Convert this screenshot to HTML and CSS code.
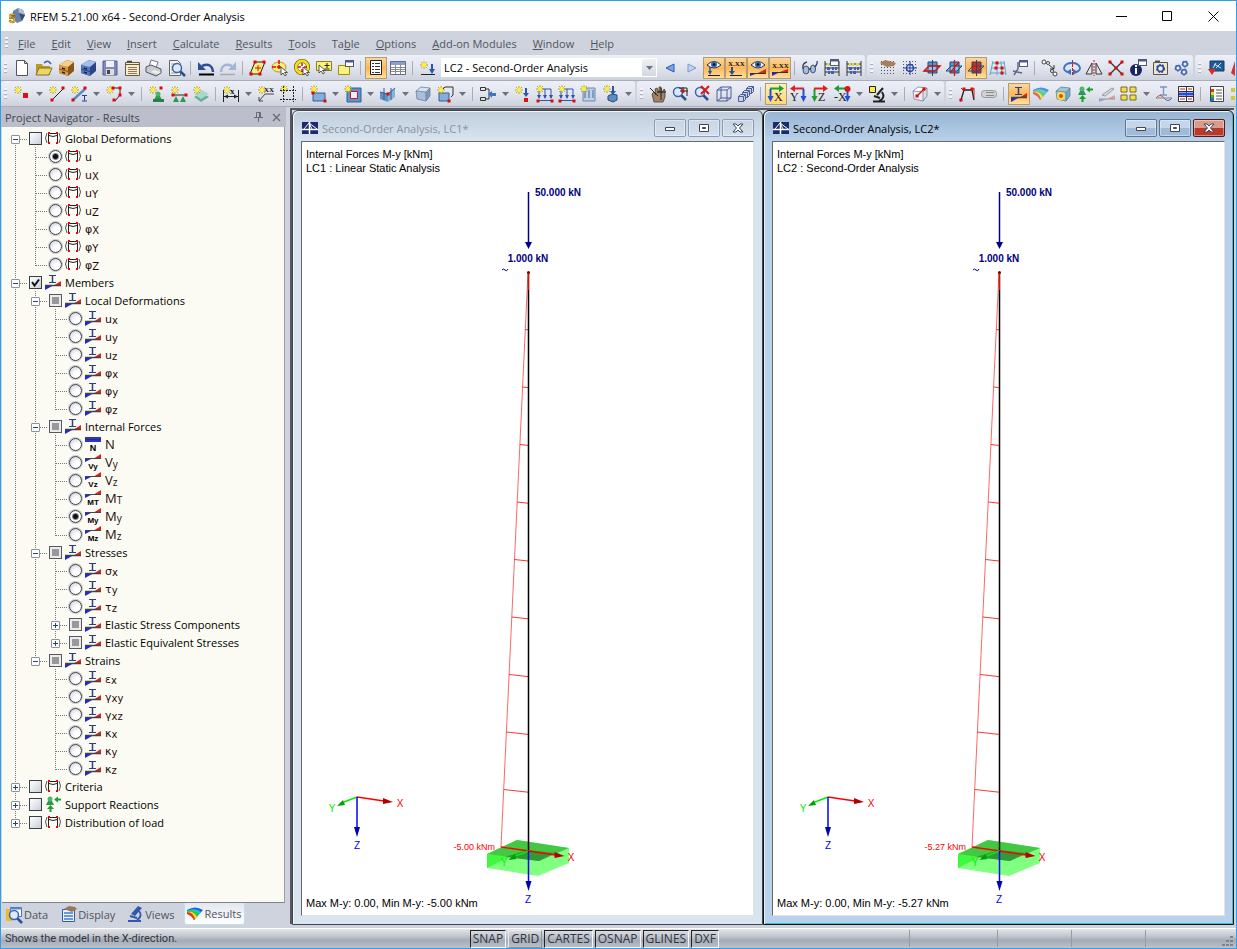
FILE: index.html
```html
<!DOCTYPE html>
<html lang="en">
<head>
  <meta charset="UTF-8">
  <meta name="viewport" content="width=device-width, initial-scale=1.0">
  <title>RFEM 5.21.00 x64 - Second-Order Analysis</title>
  <link rel="stylesheet" href="styles.css">
</head>
<body>
  <div class="app">
    <header class="titlebar">
      <span class="icon" data-icon="app"></span>
      <h1>RFEM 5.21.00 x64 - Second-Order Analysis</h1>
      <button class="caption-btn" aria-label="Minimize"><svg width="11" height="11"><path d="M0 5.5h11" stroke="#000"/></svg></button>
      <button class="caption-btn" aria-label="Maximize"><svg width="11" height="11"><path d="M.5.5h9v9h-9z" fill="none" stroke="#000"/></svg></button>
      <button class="caption-btn" aria-label="Close"><svg width="11" height="11"><path d="M.5.5l10 10M10.500.5l-10 10" stroke="#000"/></svg></button>
    </header>

    <nav class="menubar">
      <span class="grip"></span>
      <button><u>F</u>ile</button>
      <button><u>E</u>dit</button>
      <button><u>V</u>iew</button>
      <button><u>I</u>nsert</button>
      <button><u>C</u>alculate</button>
      <button><u>R</u>esults</button>
      <button><u>T</u>ools</button>
      <button>Ta<u>b</u>le</button>
      <button><u>O</u>ptions</button>
      <button><u>A</u>dd-on Modules</button>
      <button><u>W</u>indow</button>
      <button><u>H</u>elp</button>
    </nav>

    <div class="toolbar" id="toolbar-main"></div>
    <div class="toolbar" id="toolbar-model"></div>

    <main class="workspace">
      <aside class="navigator">
        <div class="nav-head">
          <h2>Project Navigator - Results</h2>
          <button aria-label="Pin"><svg width="9" height="10"><path d="M2.500.5h4v5h-4zM5.500.5v5M0 5.500h9M4.500 6v4" fill="none" stroke="#666a74"/></svg></button>
          <button aria-label="Close navigator"><svg width="9" height="9"><path d="M1 1l7 7M8 1l-7 7" stroke="#666a74" stroke-width="1.300"/></svg></button>
        </div>
        <ul class="tree" id="tree"></ul>
        <div class="tabs">
          <button class="tab"><span class="icon" data-icon="tabData"></span>Data</button>
          <button class="tab"><span class="icon" data-icon="tabDisplay"></span>Display</button>
          <button class="tab"><span class="icon" data-icon="tabViews"></span>Views</button>
          <button class="tab current"><span class="icon" data-icon="tabResults"></span>Results</button>
        </div>
      </aside>
      <section class="mdi" id="mdi"></section>
    </main>

    <footer class="statusbar">
      <p class="hint">Shows the model in the X-direction.</p>
      <div class="modes">
        <button class="mode on">SNAP</button>
        <button class="mode">GRID</button>
        <button class="mode on">CARTES</button>
        <button class="mode on">OSNAP</button>
        <button class="mode on">GLINES</button>
        <button class="mode on">DXF</button>
      </div>
      <span class="pane wide"></span>
      <span class="pane mid"></span>
      <span class="pane"></span>
      <span class="pane"></span>
      <svg class="sizer" width="12" height="12"><path d="M8 1h3v2h-3zM4 5h3v2h-3zM8 5h3v2h-3zM0 9h3v2h-3zM4 9h3v2h-3zM8 9h3v2h-3z" fill="#7d828c"/></svg>
    </footer>
  </div>
  <script src="script.js"></script>
</body>
</html>
```
FILE: styles.css
```css
* {
  box-sizing: border-box;
}

body {
  margin: 0;
  font-family: "Open Sans", "Noto Sans", sans-serif;
  font-size: 11px;
  color: #000;
}

button {
  font: inherit;
  color: inherit;
  background: none;
  border: 0;
  padding: 0;
  margin: 0;
}

h1, h2, p, ul {
  margin: 0;
  padding: 0;
  font-size: 11px;
  font-weight: normal;
}

svg {
  display: block;
  overflow: visible;
}

.app {
  display: flex;
  flex-direction: column;
  height: 100vh;
  overflow: hidden;
  border: 1px solid #2f9fec;
  background: #cfd3dd;
}

/* title bar */
.titlebar {
  display: flex;
  align-items: center;
  height: 30px;
  padding-left: 7px;
  background: #fff;
}

.titlebar h1 {
  flex: 1;
  margin-left: 4px;
}

.caption-btn {
  display: grid;
  place-items: center;
  width: 46px;
  height: 30px;
}

/* menu */
.menubar {
  display: flex;
  align-items: center;
  gap: 16px;
  height: 24px;
  padding-left: 4px;
  color: #50555f;
  white-space: nowrap;
}

.menubar .grip {
  margin-right: -6px;
}

.grip {
  flex: none;
  width: 3px;
  height: 12px;
  background: repeating-linear-gradient(#f4f5f8 0 2px, #abb0bd 2px 3px, transparent 3px 4px);
}

/* toolbars */
.toolbar {
  display: flex;
  height: 26px;
  overflow: hidden;
  border-bottom: 1px solid #a9aeba;
}

.band {
  display: flex;
  flex: none;
  align-items: center;
  height: 25px;
  padding-left: 10px;
  border-radius: 3px;
  background: linear-gradient(#edf0f7, #e2e5ee 50%, #ced2dd);
}

.band + .band {
  margin-left: 2px;
}

.band:last-child {
  flex: 1;
}

.band .grip {
  margin: 0 4px 0 -7px;
}

.tool {
  display: grid;
  flex: none;
  place-items: center;
  width: 22px;
  height: 22px;
}

.tool.active {
  border: 1px solid #b39b72;
  background: linear-gradient(#fbd7a0, #fcb759 50%, #ffe09a);
}

.tool.light {
  background: linear-gradient(#fff0ba, #ffd672);
}

.drop {
  flex: none;
  display: grid;
  place-items: center;
  width: 13px;
  height: 22px;
}

.sep {
  flex: none;
  width: 1px;
  height: 14px;
  margin: 0 4px 0 3px;
  background: #a9adba;
}

.combo {
  display: flex;
  flex: none;
  width: 216px;
  height: 19px;
  margin: 0 2px;
  background: #fff;
}

.combo select {
  flex: 1;
  appearance: none;
  border: 0;
  padding: 0 3px;
  background: #fff;
  font: inherit;
  color: #000;
}

.combo span {
  display: grid;
  place-items: center;
  width: 14px;
  margin: 1px;
  background: linear-gradient(#eff1f6, #d3d7e0);
}

/* navigator */
.workspace {
  display: flex;
  flex: 1;
  min-height: 0;
  gap: 4px;
}

.navigator {
  display: flex;
  flex: none;
  flex-direction: column;
  width: 285px;
}

.nav-head {
  display: flex;
  align-items: center;
  gap: 9px;
  height: 20px;
  padding: 0 5px 0 4px;
  background: #bcbfcb;
  color: #41454f;
}

.nav-head h2 {
  flex: 1;
}

.tree {
  flex: 1;
  min-height: 0;
  overflow: hidden;
  margin: 0 1px;
  padding-top: 2px;
  border-right: 1px solid #9b9fad;
  border-bottom: 1px solid #7e8290;
  background: #fbfbf3;
  list-style: none;
}

.tree ul {
  padding-left: 20px;
  list-style: none;
}

.tree li {
  background: repeating-linear-gradient(#777 0 1px, transparent 1px 2px) 13px 0 / 1px 100% no-repeat;
}

.tree li:last-child {
  background-size: 1px 11px;
}

.tree > li:first-child {
  background-position: 13px 10px;
}

.node {
  display: flex;
  align-items: center;
  height: 18px;
  padding-left: 9px;
  background: repeating-linear-gradient(90deg, #777 0 1px, transparent 1px 2px) 14px 10px / 11px 1px no-repeat;
  white-space: nowrap;
}

.expander {
  width: 9px;
  height: 9px;
  margin-top: 3px;
  border: 1px solid #8d919b;
  border-radius: 1px;
  background: #fff;
}

.stub {
  width: 9px;
}

.node label {
  display: flex;
  align-items: center;
  height: 18px;
  margin-left: 9px;
}

.node input {
  appearance: none;
  flex: none;
  width: 13px;
  height: 13px;
  margin: 0;
  border: 1px solid #3c3f45;
  background: linear-gradient(135deg, #fff, #c9d0da);
}

.node input[type="radio"] {
  border-radius: 50%;
  background: radial-gradient(circle at 65% 70%, #fff 30%, #c6cad6);
  box-shadow: 0 0 0 1px #c9ccd0;
}

.node input[type="radio"]:checked {
  background: radial-gradient(circle, #111 2px, #fff 4px, #d5d8e0);
}

.node input.partial {
  border-color: #55585e;
  background: linear-gradient(#999, #999) center / 7px 7px no-repeat #ececf0;
}

.check {
  display: grid;
}

.check > * {
  grid-area: 1 / 1;
}

.node .icon {
  margin: 0 4px 0 3px;
}

.node sub {
  font-size: 10px;
  line-height: 1;
  vertical-align: -1px;
}

.node .symbol {
  font-family: "DejaVu Sans", "Noto Sans", sans-serif;
  font-size: 11px;
  color: #1f0b0b;
}

.node .symbol.force {
  font-family: "Open Sans", "Noto Sans", sans-serif;
  font-size: 13px;
}

.tabs {
  display: flex;
  align-items: flex-start;
  height: 25px;
  padding-left: 5px;
  color: #50555f;
}

.tab {
  display: flex;
  align-items: center;
  gap: 2px;
  height: 22px;
  margin-right: 12px;
}

.tab.current {
  margin-left: -3px;
  padding: 0 3px 0 2px;
  border: 1px solid #bfe2e4;
  border-top: 0;
  border-radius: 0 0 3px 3px;
  background: linear-gradient(#e2e8f0, #fff);
}

/* model windows */
.mdi {
  display: grid;
  flex: 1;
  grid-template-columns: 1fr 1fr;
  min-width: 0;
  margin: 1px 2px 4px 0;
  border-top: 2px solid #55585f;
  border-left: 2px solid #55585f;
}

.win {
  display: flex;
  flex-direction: column;
  min-width: 0;
  padding: 0 8px;
  border: 1px solid #44474d;
  border-radius: 6px 6px 0 0;
  background: linear-gradient(#bfcddb, #d9e4f1 30px);
  box-shadow: inset 1px 1px #eef4fa;
}

.win.front {
  border-color: #111;
  background: linear-gradient(#98b4d2, #b9d1ea 30px);
  box-shadow: inset 1px 1px #eaf3fb, inset -1px -1px #32c3da;
}

.win-title {
  display: flex;
  align-items: center;
  gap: 2px;
  height: 30px;
  padding-top: 4px;
  color: #8b929a;
}

.front .win-title {
  color: #000;
}

.win-title h2 {
  flex: 1;
  margin-left: 1px;
}

.win-btn {
  display: grid;
  place-items: center;
  width: 32px;
  height: 18px;
  border: 1px solid #8a9cb8;
  border-radius: 2px;
  box-shadow: inset 0 0 0 1px rgba(255, 255, 255, 0.4);
}

.front .win-btn {
  border-color: #5f7594;
  background: linear-gradient(#c3d6ea 50%, #a0bbd8 50%);
}

.front .win-btn.close {
  border-color: #4e1c1f;
  background: linear-gradient(#dc9a8b 50%, #b93a2b 50%);
}

.view {
  display: flex;
  flex: 1;
  flex-direction: column;
  min-height: 0;
  margin-bottom: 8px;
  padding: 5px 4px;
  border: 1px solid #e3e3e3;
  border-top-color: #696969;
  border-left-color: #696969;
  background: #fff;
  font-family: "Liberation Sans", Arial, sans-serif;
  line-height: 14px;
}

.model {
  flex: 1;
  min-height: 0;
  width: 100%;
}

.model text {
  text-anchor: middle;
}

.load-label {
  font-size: 10px;
  font-weight: bold;
  fill: #000080;
}

.model .moment-label {
  font-size: 9px;
  fill: #f00;
  text-anchor: end;
}

.axis-label {
  font-size: 10px;
}

/* status bar */
.statusbar {
  display: flex;
  align-items: center;
  height: 20px;
  padding: 0 2px 0 4px;
  border-top: 1px solid #fff;
  background: linear-gradient(#e3e5ec, #c4c8d1 35%, #a6abb6 60%, #bdc1ca);
  color: #30343c;
}

.hint {
  flex: 1;
  font-family: Roboto, "Liberation Sans", sans-serif;
}

.modes {
  display: flex;
  gap: 2px;
}

.mode {
  height: 18px;
  padding: 0 2px;
  border: 1px solid #e9ebef;
  border-right-color: #8f939c;
  border-bottom-color: #8f939c;
  font-size: 12px;
  line-height: 16px;
}

.mode.on {
  border-color: #222 #f5f6f8 #f5f6f8 #222;
}

.pane {
  width: 74px;
  height: 17px;
  border-right: 1px solid #979ba4;
}

.pane.wide {
  width: 191px;
}

.pane.mid {
  width: 88px;
}

.sizer {
  margin: 4px 0 0 76px;
}
```
FILE: script.js
```js
// ---- drawing helpers -------------------------------------------------
const star = (x, y) =>
  `<path d="M${x} ${y - 4}v8M${x - 4} ${y}h8M${x - 3} ${y - 3}l6 6M${x + 3} ${y - 3}l-6 6" stroke="#b5a92a"/><circle cx="${x}" cy="${y}" r="2.2" fill="#ffee3a"/>`;
const dot = (x, y) => `<rect x="${x - 1.5}" y="${y - 1.5}" width="3" height="3" fill="#e00808"/>`;
const path = (d, stroke = '#222', fill = 'none', w = 1) =>
  `<path d="${d}" stroke="${stroke}" fill="${fill}" stroke-width="${w}"/>`;
const fillPath = (d, fill) => `<path d="${d}" fill="${fill}"/>`;
const word = (x, y, s, size = 8, color = '#111') =>
  `<text x="${x}" y="${y}" font-family="Liberation Serif, serif" font-weight="bold" font-size="${size}" fill="${color}">${s}</text>`;
const dots = () => {
  let d = '';
  for (let y = 2; y < 17; y += 3) for (let x = 2; x < 17; x += 3) d += `M${x} ${y}h1v1h-1z`;
  return fillPath(d, '#555');
};

const beam = path('M5 2.500h7M8.500 2.500v7M5 9.500h7', '#2b3f86') + path('M8.500 2v8', '#2b3f86', 'none', 1.5) +
  fillPath('M1 12h9l-9 5z', '#2028d8') + fillPath('M9 13l8-5v5z', '#dc2020') + path('M1 12.500h16', '#444', 'none', 1.5);
const slope = fillPath('M1 5h8l-8 4z', '#2028d8') + fillPath('M9 6l8-5v4z', '#dc2020') + path('M1 5.500h16', '#444');
const forceIcon = (s) => slope + `<text x="9" y="16" text-anchor="middle" font-family="Liberation Sans, sans-serif" font-size="8" font-weight="bold">${s}</text>`;
const drawer = (a, b, c) => fillPath('M2 6l8-5 7 2v9l-6 5-9-3z', c) + fillPath('M2 6l9 2v9l-9-3z', a) +
  fillPath('M2 6l8-5 7 2-6 5z', b) + path('M2 10l9 2.500', c) + fillPath('M5 8.500l3 .8v1.500l-3-.8zM5 12.500l3 .8v1.500l-3-.8z', '#222');
const winGlyph = (x, y) => `<rect x="${x}" y="${y}" width="8" height="6" fill="#fff" stroke="#555b77"/><path d="M${x} ${y + 1}h8" stroke="#4c5a90" stroke-width="2"/>`;
const pointer = (x, y) => path(`M${x} ${y}v8l2-2 2 3 1.500-1-2-2.500h3z`, '#333', '#fff', 0.8);
const lens = (x, y) => path(`M${x + 3} ${y + 3}l5 5`, '#2f4f95', 'none', 2.5) + `<circle cx="${x}" cy="${y}" r="4.500" fill="#dceafd" stroke="#4263a8" stroke-width="1.500"/>`;
const eye = path('M2 6q7-7 14 0q-7 6-14 0z', '#26324f', '#eaf2ff') + '<circle cx="9" cy="5.500" r="3" fill="#3870b8"/><circle cx="9" cy="5.500" r="1.300" fill="#000"/>';
const cube = (a, b, c) => fillPath('M2 6l5-4 9 1-4 4z', a) + fillPath('M2 6l10 1v9l-9-2z', b) + fillPath('M12 7l4-4v8l-4 5z', c) + path('M2 6l5-4 9 1v8l-4 5-9-2zM2 6l10 1v9M12 7l4-4', '#64748c', 'none', 0.7);
const plane = fillPath('M5 3h9v11h-9z', '#4a9bd8') + fillPath('M1 12l5-5h11l-5 5z', '#8cc9f2') + path('M5 3h9v11h-9zM1 12l5-5h11l-5 5zM9.500 1v16', '#26486e');
const cone = (x, y) => fillPath(`M${x - 4} ${y + 6}l2-4v-3h4v3l2 4z`, '#2e9652') + `<circle cx="${x}" cy="${y}" r="2.500" fill="#48b870"/>`;
const gear = (x, y, r, c) => `<circle cx="${x}" cy="${y}" r="${r}" fill="none" stroke="${c}" stroke-width="${r}" stroke-dasharray="1.500 1"/><circle cx="${x}" cy="${y}" r="${r}" fill="#e8eefb" stroke="${c}" stroke-width="1.500"/>`;
const axisLetter = (x, s) => `<text x="${x}" y="16" font-family="Liberation Serif, serif" font-size="12" fill="#222">${s}</text>`;
const axes = (s, h, v, flip) => (flip
  ? path('M15 3.500h-10', h, 'none', 2) + fillPath('M6 0v7l-5-3.500z', h) + path('M14.500 4v8', v, 'none', 2) + fillPath('M11.500 11h6l-3 6z', v)
  : path('M3 3.500h10', h, 'none', 2) + fillPath('M12 0v7l5-3.500z', h) + path('M3.500 4v8', v, 'none', 2) + fillPath('M.5 11h6l-3 6z', v)) +
  axisLetter(flip ? 1 : 7, s);
const rainbow = (o) => `<g opacity="${o}">` + fillPath('M1 5q8-5 16 0l-9 10q-1-5-7-8z', '#2060e0') + fillPath('M1 6q8-4 14 1l-7 8q-1-5-7-8z', '#20c8d0') +
  fillPath('M1 6q8-2 12 3l-5 6q-1-5-7-8z', '#28cc40') + fillPath('M1 7q7-1 10 5l-3 3q-1-5-7-8z', '#f4e022') + fillPath('M1 7q6 0 8 7l-1 1q-2-4-7-6z', '#ee3420') + '</g>';
const frame = path('M4.500 15v-10.500h9v10.500M5 6.500q4 2 8 0', '#222') + fillPath('M4 3h2v2h-2zM12 3h2v2h-2zM4 13h2v2h-2zM12 13h2v2h-2z', '#e00808') + path('M3 4q-3 5 0 10M15 4q3 5 0 10', '#555');
const abacus = path('M2 2v15M16 2v15M2 5h14M2 9h14M2 13h14', '#333') + fillPath('M4 4h2v3h-2zM7 4h2v3h-2zM11 4h3v3h-3z', '#e8d848') + fillPath('M4 8h3v3h-3zM9 8h2v3h-2zM12 8h2v3h-2zM5 12h2v3h-2zM8 12h3v3h-3z', '#4060b8');
const loads = (c) => path('M3 4h12v9M3 4v9M9 4v9M1 15.500h16', c) + fillPath('M1 10h4l-2 4zM7 10h4l-2 4zM13 10h4l-2 4z', c);

const icons = {
  app: fillPath('M5 4l5-3 5 2 2 5-3 6-5 2-5-5z', '#6781a8') + fillPath('M10 1l5 2 2 5-6-2z', '#a9bedb') + fillPath('M11 6l6 2-3 6z', '#394c70') +
    '<text x="1" y="16" font-family="Liberation Sans, sans-serif" font-size="12" font-weight="bold" fill="#ffd83a" stroke="#6e5500" stroke-width=".6">5</text>',
  new: path('M3.500 1.500h8l3 3v12h-11zM11.500 1.500v3h3', '#555', '#fff'),
  open: fillPath('M1 5h6l1 2h7v9h-14z', '#b79a28') + path('M1 16l3-7h13l-3 7z', '#86701c', '#ecd568') + path('M9 4q4-4 7 1', '#3c5f9c', 'none', 1.5),
  drawerA: drawer('#d9983c', '#f4cf85', '#86561b'),
  drawerB: drawer('#5275c4', '#a6bdf0', '#2b4484'),
  save: path('M2 2h14v14h-14z', '#555c82', '#8188c0') + fillPath('M5 2h8v6h-8z', '#f0f2fa') + fillPath('M5 10h8v6h-8z', '#ddd') + fillPath('M6 11h3v4h-3z', '#444'),
  notes: path('M2.500 3.500h14v13h-14z', '#6a5a40', '#f6ead0') + path('M5 8.500h9M5 10.500h9M5 12.500h9M5 14.500h9', '#937a55') + path('M4 2.500h5', '#444', 'none', 1.5) + path('M2.500 5.500h14', '#6a5a40'),
  print: path('M4 8l2-7 7 2-2 6z', '#777', '#fff') + path('M1 8l5-2 10 4v4l-5 3-10-4z', '#555', '#c9ccd6') + fillPath('M6 13l7 2 3-2-7-2z', '#f3f0e0'),
  preview: path('M2.500 1.500h8l3 3v12h-11z', '#666', '#f4f4f4') + path('M4 5h6M4 8h4M4 11h4M4 14h6', '#999') + lens(10, 9),
  undo: path('M16 13q-1-10-11-6', '#2c4f94', 'none', 2.5) + fillPath('M1 3v8h8z', '#2c4f94') + path('M2 15.500h15', '#000', 'none', 2),
  redo: path('M2 13q1-10 11-6', '#a4b4d4', 'none', 2.5) + fillPath('M17 3v8h-8z', '#a4b4d4') + path('M1 15.500h15', '#aaa', 'none', 1.5),
  para: path('M6 3h10l-5 12h-10z', '#222', '#f8f07a') + dot(6, 3) + dot(15, 3) + dot(11, 15) + dot(2, 15) + path('M9 6v6M6 9h6', '#e00808'),
  ellipse: '<ellipse cx="8" cy="8" rx="7" ry="5" fill="#f8f07a" stroke="#b4982c"/>' + path('M8 1v4M1 8h4M8 6v4M6 8h4', '#e00808', 'none', 1.5) + pointer(10, 8),
  ring: '<circle cx="9" cy="8" r="6" fill="#fff" stroke="#5a5200" stroke-width="4"/><circle cx="9" cy="8" r="6" fill="none" stroke="#f2e21c" stroke-width="2.800"/>' + path('M9 4v3M5 8h3M9 10v3M11 8h3', '#e00808', 'none', 1.5) + pointer(10, 8),
  select: path('M1.500 2.500h15v9h-15z', '#8a7d22', '#fbf27a') + path('M12 4v5M9.500 6.500h5M9.500 10h5', '#222') + pointer(4, 6),
  winBox: path('M1.500 6.500h11v9h-11z', '#9c8c20', '#fbf27a') + winGlyph(8.5, 1.5),
  list: path('M3.500 1.500h11v14h-11z', '#222', '#fff') + path('M5 4.500h2M5 7.500h2M5 10.500h2M5 13.500h2M8 4.500h5M8 7.500h5M8 10.500h5M8 13.500h5', '#333'),
  table: path('M1.500 2.500h15v13h-15z', '#666c80', '#fff') + fillPath('M2 3h14v3h-14z', '#8aa0cc') + path('M2 8.500h14M2 10.500h14M2 12.500h14M6.500 6v9M11.500 6v9', '#888'),
  lcNew: star(5, 6) + path('M13 5v7', '#2e55a8', 'none', 2) + fillPath('M10 10h6l-3 5z', '#2e55a8') + path('M2 15.500h14', '#222'),
  prev: path('M13 5v8l-8-4z', '#2c56b8', '#7ea4e8'),
  next: path('M5 5v8l8-4z', '#7d99cc', '#c0d3f2'),
  eyeLoad: eye + path('M5 8v6', '#2c4f94', 'none', 1.5) + fillPath('M3 12h4l-2 4z', '#2c4f94') + path('M3 16.500h12', '#222'),
  numLoad: word(1, 7, 'X.XX', 7) + path('M5 8v5', '#2c4f94', 'none', 2) + fillPath('M2 12h6l-3 4z', '#2c4f94') + path('M3 16.500h12', '#222'),
  eyeRes: eye + fillPath('M1 14h8l-8 3z', '#2028d8') + fillPath('M9 14l8-4v4z', '#dc2020') + path('M1 14.500h16', '#333'),
  numRes: word(1, 9, 'X.XX', 7) + fillPath('M1 13h8l-8 4z', '#2028d8') + fillPath('M9 13l8-3v3z', '#dc2020') + path('M1 13.500h16', '#333'),
  glasses: '<g fill="#a9bdd8" stroke="#3c5078"><ellipse cx="5" cy="11" rx="3" ry="4"/><ellipse cx="12" cy="10" rx="2.500" ry="4"/></g>' + path('M2 10q-1-6 4-7M14 8q3-4 2-6M8 10h2', '#2c3f66', 'none', 1.3),
  abacusWin: abacus + winGlyph(7.5, 0.5),
  abacus,
  handGrid: dots() + fillPath('M1 4l5-3 8 2 3 1-2 3-7 1-4-2z', '#a77f5b'),
  snapGrid: dots() + '<circle cx="9" cy="9" r="3.500" fill="none" stroke="#2745a8" stroke-width="1.500"/>' + path('M9 2v14M2 9h14', '#2745a8'),
  planeA: plane + path('M1 12l5-5h11l-5 5z', '#d01818', 'none', 1.5),
  planeB: plane + path('M9.500 1v16M5 14l9-11', '#d01818', 'none', 1.3),
  planeC: fillPath('M5 3h9v11h-9z', '#e02818') + path('M5 3h9v11h-9zM1 12l5-5h11l-5 5zM9.500 1v16', '#26486e'),
  gridRed: path('M4 2l-3 14M8 2v14M12 2l1 14M15 2l2 14M3 4h13M2 9h14M1 14h16', '#62a8c8') + dot(8, 4) + dot(7, 9) + dot(13, 9) + dot(13, 14),
  wrench: path('M3 16l4-6M7 10v-7M2 12l9 2', '#5e6880', 'none', 1.5) + winGlyph(8.5, 1.5),
  moveCopy: '<g fill="#fff" stroke="#444"><circle cx="3" cy="3" r="2"/><circle cx="7" cy="4" r="1.500"/><circle cx="14" cy="15" r="2"/><circle cx="11" cy="12" r="1.500"/></g>' + path('M8 6l5 4M13 6v4h-4', '#333'),
  rotate: path('M5 13q-4-1-4-4q1-5 8-5t8 5q0 3-4 4', '#3f73bd', 'none', 1.8) + fillPath('M8 10v6l-5-3zM10 10v6l5-3z', '#3f73bd') + '<path d="M9.500 1v16" stroke="#d01818" stroke-dasharray="3 1"/>',
  mirror: path('M7 4v11h-6zM11 4v11h6z', '#333', '#e4e7ee') + '<path d="M9 1v16" stroke="#d01818" stroke-dasharray="2 1"/>',
  cross: path('M3 3l12 12M15 3l-12 12', '#333', 'none', 1.3) + dot(3, 3) + dot(15, 3) + dot(9, 9) + dot(3, 15) + dot(15, 15),
  info: '<circle cx="7" cy="11" r="6" fill="#1c2468"/>' + path('M7 9v6', '#fff', 'none', 2) + fillPath('M6 6h2v2h-2z', '#fff') + winGlyph(9.5, 0.5),
  gearPage: path('M2.500 3.500h14v12h-14z', '#555', '#f2e6c8') + path('M4 2.500h5', '#555', 'none', 2) + gear(9.5, 9.5, 3, '#2a4a94'),
  gears: gear(5, 9, 2.3, '#4468b0') + gear(12, 5, 2.3, '#4468b0') + gear(11, 13, 2.3, '#4468b0'),
  export: path('M3 2h14v10h-14z', '#123a66', '#1d5d94') + path('M6 9l3-5M9 9l5-5M7 5l7 4', '#cde4f8') + fillPath('M1 10h8l-4 6z', '#e02828'),
  redEdge: fillPath('M2 14l4-12v15z', '#d83030'),
  node: star(5, 5) + fillPath('M10 8h5v5h-5z', '#e01010'),
  line: star(5, 5) + path('M4 15l11-11', '#222') + dot(4, 15) + dot(15, 3),
  member: star(5, 5) + path('M3 15l12-11', '#5a8cc8', 'none', 2.5) + dot(3, 15) + dot(15, 3) + path('M12 10.500h5M14.500 10.500v5M12 16h5', '#24408c'),
  poly: star(5, 5) + path('M7 3h8v7l-5 6', '#222') + dot(8, 3) + dot(15, 3) + dot(15, 10) + dot(9, 15),
  support: star(5, 5) + cone(10, 9) + fillPath('M5 14h11v3h-11z', '#2a8040') + dot(13, 3),
  supportLine: star(5, 5) + path('M3 10h13', '#222') + dot(3, 10) + dot(16, 10) + fillPath('M6 11l3 6h-6zM13 11l3 6h-6z', '#2e9652'),
  surfSupport: fillPath('M2 12l8-4 7 4-8 5z', '#6dae96') + fillPath('M2 9l8-4 7 4-8 5z', '#a8d8c8') + star(5, 5),
  dim: star(5, 5) + path('M1.500 5v12M16.500 5v12M2 11.500h14', '#222') + fillPath('M2 11.500l4-2v4zM16 11.500l-4-2v4z', '#222') + word(8, 9, 'x', 9),
  text: star(5, 5) + word(7, 7, 'XX', 7) + path('M17 9h-9l-6 7M2 12v4h4', '#444'),
  rectSel: star(5, 4) + '<path d="M4.500 1v16M14.500 1v16M1 5.500h16M1 14.500h16" stroke="#222" stroke-dasharray="2 1"/>',
  surface: path('M4 8h12v8h-12z', '#345e94', '#84aedb') + star(5, 4) + dot(4, 8) + dot(16, 16),
  opening: path('M3 3h14v14h-14z', '#345e94', '#5f92c8') + path('M6.500 6.500h7v7h-7z', '#d01818', '#e8f0f8') + star(4, 4),
  shell: fillPath('M1 7l8 2v8l-8-3z', '#5b94cc') + fillPath('M9 9l7-6v9l-7 5z', '#82b4e0') + path('M5 3v12M12 3v12M1 7l8 2 7-6', '#335c88') + dot(9, 9),
  solid: cube('#d4e2f4', '#a8bfdc', '#7f9ac0'),
  solidNew: path('M7 4l2-2h8v8l-2 2', '#333') + path('M3 8h10v8h-10z', '#345e94', '#84aedb') + star(5, 5) + dot(13, 16),
  tree: path('M1.500 2.500h5v3h-5zM1.500 12.500h5v3h-5zM7 4h3v10h-3', '#333') + fillPath('M9 9l4-3v2h4v3h-4v2z', '#3c74c4'),
  loadNode: star(5, 5) + path('M12 3v6', '#2c56b0', 'none', 2) + fillPath('M9 8h6l-3 4z', '#2c56b0') + fillPath('M10 13h4v4h-4z', '#e01010'),
  loadMember: loads('#2c56b0') + star(4, 4) + dot(2, 16) + dot(16, 16),
  loadFree: path('M3 3h12v13h-12z', '#7188ac', '#bdd0e6') + path('M5 5v8M9 5v8M13 5v8', '#6c8cb4', 'none', 1.5) + star(4, 4),
  loadSolid: path('M11 1v6', '#2c56b0', 'none', 2) + fillPath('M8 6h6l-3 4z', '#2c56b0') + path('M6 11l4-2 5 1v5l-4 2-5-2z', '#2c4a6e', '#5b8cc8') + star(5, 4),
  hand: path('M5 17l-2-8 2-2 2 3-1-6 2-1 2 5 0-6 2 0 1 6 2-4 1 1v7l-2 5z', '#4a3a2c', '#a08468', 0.8) + path('M1 3l8 8M12 3v12M8 7h9', '#222'),
  zoomWin: lens(7, 7) + path('M8 3h8v8M12 2v6M9 6h8', '#222') + dot(12, 6),
  zoomX: lens(7, 7) + path('M8 1l8 8M16 1l-8 8', '#d81818', 'none', 2),
  iso: path('M2 5h10v11h-10zM6 2h10v11h-4M2 5l4-3M12 5l4-3M12 16l4-3M6 2v11l-4 3M6 13h6', '#4c5f94'),
  boxes: [[9, 1], [5, 5], [1, 9]].map(([x, y]) => path(`M${x + 0.5} ${y + 2.500}l2-2h5v5l-2 2h-5zM${x + 0.500} ${y + 2.500}h5v5M${x + 5.500} ${y + 2.500}l2-2`, '#4c5f94', '#c8d2e8')).join(''),
  axX: axes('X', '#18a030', '#2050d8'),
  axY: axes('Y', '#e02020', '#2050d8', true),
  axZ: axes('Z', '#e02020', '#18a030'),
  axNX: axes('-X', '#18a030', '#2050d8', true) + '<circle cx="14.500" cy="4" r="3" fill="#d81818"/>',
  scope: path('M1.500 1.500h6v6h-6z', '#222', '#fbf03c') + path('M15 3l-6 7M6 11l6 2M5 16.500h12M14 7q4 6-3 9', '#222', 'none', 2),
  cut: cube('#fff', '#f0f0f4', '#dcdce2') + path('M6 11l7-7', '#d81818', 'none', 1.5) + dot(6, 11) + dot(13, 4),
  bent: path('M3 15l3-10h8l2 10M3 15l-1 1', '#222', 'none', 1.3) + path('M3 3l3 3M16 3v10', '#d01818') + dot(6, 4) + dot(14, 4) + dot(3, 15),
  capsule: '<rect x="1.500" y="5.500" width="15" height="7" rx="3" fill="#d2d2d2" stroke="#999"/>' + path('M6 7.500h8M6 10.500h8', '#888'),
  beam,
  rainbow: rainbow(0.7),
  contour: cube('#9cc8d8', '#8ad0c8', '#70a8c8') + '<circle cx="7" cy="11" r="4" fill="#f4e040"/><circle cx="7" cy="11" r="2" fill="#ec4020"/>',
  reaction: cone(6, 4) + path('M12 4.500h5', '#18a030', 'none', 2) + fillPath('M10 4.500l4-3v6z', '#18a030') + path('M6.500 13v4', '#18a030', 'none', 2) + fillPath('M3 14l3.500-4 3.500 4z', '#18a030'),
  beamSoft: path('M4 10l10-7 2 1-9 7z', '#999', '#d8dce4') + fillPath('M1 14h8l-8 3z', '#9a9ee0') + fillPath('M9 14l8-4v4z', '#e09a9a') + path('M1 14h16', '#999'),
  blocks: ['1 2', '10 2', '1 10', '10 10'].map(p => path(`M${p}h6v5h-6z`, '#7d6c12', '#f4dd56')).join(''),
  wave: path('M5 2h7M8.500 2v8M5 10h7', '#7f94c0', 'none', 1.3) + path('M1 13q4-5 8 0', '#d84848') + path('M9 13q4 5 8 0', '#4868d8') + path('M1 13h16', '#888'),
  resTable: path('M1.500 1.500h15v15h-15zM9.500 1v16M1 6.500h16M1 11.500h16', '#333', '#fff') + path('M3 4h5M11 4h4M3 14h5M11 14h4', '#d02020') + path('M2 9h14', '#2848e0', 'none', 3),
  legend: path('M3.500 1.500h13v15h-13z', '#444', '#fff') + path('M9 5h6M9 8h6M9 11h6M9 14h6', '#555') + fillPath('M4 4h3v3h-3z', '#e03030') + fillPath('M4 7h3v3h-3z', '#ecd820') + fillPath('M4 10h3v3h-3z', '#28b050') + fillPath('M4 13h3v3h-3z', '#2868e0'),
  yellowEdge: fillPath('M2 3h4v4h-4zM2 11h4v4h-4z', '#d8c830'),
  frame,
  forceN: fillPath('M1 2h16v5h-16z', '#2a30e0') + path('M1 4.500h16', '#333') + '<text x="9" y="16" text-anchor="middle" font-family="Liberation Sans, sans-serif" font-size="9" font-weight="bold">N</text>',
  forceVy: forceIcon('Vy'), forceVz: forceIcon('Vz'), forceMT: forceIcon('MT'), forceMy: forceIcon('My'), forceMz: forceIcon('Mz'),
  tabData: fillPath('M1 4h6v12h-6z', '#e8bd2c') + path('M5.500 2.500h11v9h-11z', '#4a72b4', '#fff') + path('M5 3.500h12', '#4a8be0', 'none', 2) + lens(9, 10),
  tabDisplay: path('M3.500 4.500h12v12h-12z', '#2c5cab', '#eaf2fc') + path('M5 8h9M5 11h9M5 14h9', '#3f7bd0', 'none', 1.5) + fillPath('M5 4l5-3 6 1 2 2-5 3z', '#98765a'),
  tabViews: fillPath('M12 1l4 2-7 8-4-2z', '#3158ac') + path('M4 11l7 2M13 6q4 5-2 9', '#3158ac', 'none', 2) + fillPath('M2 15h13v2h-13z', '#3158ac'),
  tabResults: rainbow(1),
  bridge: fillPath('M1 3h16v12h-16z', '#1d2a6c') + path('M1 10.500h16M8.500 3v12', '#fff', 'none', 1.5) + path('M3 10l5-6 8 6M8 4l3 6', '#fff')
};

const svg = (name, size = 18, box = '0 0 18 18') => `<svg width="${size}" height="${size}" viewBox="${box}">${icons[name]}</svg>`;

document.querySelectorAll('[data-icon]').forEach((el) => {
  el.innerHTML = el.closest('.tabs') ? svg(el.dataset.icon, 16, '1 1 16 16') : svg(el.dataset.icon);
});

// ---- toolbars --------------------------------------------------------
// "|" separator, "v" drop arrow, "*name" pressed button, "combo" load case list
const caret = '<svg width="7" height="4"><path d="M0 0h7l-3.500 4z" fill="#6c717d"/></svg>';
const combo = `<div class="combo"><select aria-label="Load case"><option>LC2 - Second-Order Analysis</option><option>LC1 - Linear Static Analysis</option></select><span>${caret}</span></div>`;

const toolItem = (item) => {
  if (item === '|') return '<span class="sep"></span>';
  if (item === 'v') return `<button class="drop" aria-label="More">${caret}</button>`;
  if (item === 'combo') return combo;
  const name = item.replace('*', '');
  const state = item[0] === '*' ? (name === 'axX' ? ' active light' : ' active') : '';
  return `<button class="tool${state}" aria-label="${name}">${svg(name)}</button>`;
};

const fillToolbar = (id, bands) => {
  document.getElementById(id).innerHTML = bands
    .map((band) => `<div class="band"><span class="grip"></span>${band.split(' ').map(toolItem).join('')}</div>`)
    .join('');
};

fillToolbar('toolbar-main', [
  'new open drawerA drawerB save notes print preview | undo redo | para ellipse ring select winBox | *list table | lcNew combo prev next *eyeLoad *numLoad *eyeRes *numRes | glasses abacusWin abacus',
  'handGrid snapGrid planeA planeB *planeC gridRed wrench | moveCopy rotate mirror cross info gearPage gears',
  'export redEdge'
]);
fillToolbar('toolbar-model', [
  'node v line member v poly v | support supportLine surfSupport | dim v text rectSel | surface v opening v shell v solid solidNew v | tree v loadNode loadMember loadMember loadFree loadSolid v',
  'hand zoomWin zoomX iso boxes | *axX axY axZ axNX v scope v | cut v',
  'bent capsule | *beam rainbow contour reaction beamSoft blocks v wave resTable | legend yellowEdge'
]);

// ---- results tree ----------------------------------------------------
const radios = (group, icon, list, checked) => list.map((s) => ({
  radio: group,
  icon: typeof icon === 'function' ? icon(s) : icon,
  html: `<span class="symbol">${s[0]}${s[1] ? `<sub>${s.slice(1)}</sub>` : ''}</span>`,
  checked: s === checked
}));
const forces = radios('member', (s) => 'force' + s, ['N', 'Vy', 'Vz', 'MT', 'My', 'Mz'], 'My')
  .map((n) => ({ ...n, html: n.html.replace('symbol', 'symbol force') }));

const tree = [
  { html: 'Global Deformations', icon: 'frame', open: true, children: radios('global', 'frame', ['u', 'uX', 'uY', 'uZ', 'φX', 'φY', 'φZ'], 'u') },
  { html: 'Members', icon: 'beam', check: 'tick', open: true, children: [
    { html: 'Local Deformations', icon: 'beam', check: 'partial', open: true, children: radios('member', 'beam', ['ux', 'uy', 'uz', 'φx', 'φy', 'φz']) },
    { html: 'Internal Forces', icon: 'beam', check: 'partial', open: true, children: forces },
    { html: 'Stresses', icon: 'beam', check: 'partial', open: true, children: [
      ...radios('member', 'beam', ['σx', 'τy', 'τz']),
      { html: 'Elastic Stress Components', icon: 'beam', check: 'partial', open: false },
      { html: 'Elastic Equivalent Stresses', icon: 'beam', check: 'partial', open: false }
    ] },
    { html: 'Strains', icon: 'beam', check: 'partial', open: true, children: radios('member', 'beam', ['εx', 'γxy', 'γxz', 'κx', 'κy', 'κz']) }
  ] },
  { html: 'Criteria', icon: 'frame', open: false },
  { html: 'Support Reactions', icon: 'reaction', open: false },
  { html: 'Distribution of load', icon: 'frame', open: false }
];

const renderNode = (n) => {
  const expander = n.radio
    ? '<span class="stub"></span>'
    : `<button class="expander" aria-label="Toggle"><svg width="7" height="7"><path d="M1 3.500h5${n.open ? '' : 'M3.500 1v5'}" stroke="#27408b"/></svg></button>`;
  const tick = n.check === 'tick' ? '<svg width="13" height="13"><path d="M3 6l2.500 3.500l4.500-6" fill="none" stroke="#111" stroke-width="2"/></svg>' : '';
  const input = n.radio
    ? `<input type="radio" name="${n.radio}"${n.checked ? ' checked' : ''}>`
    : `<span class="check"><input type="checkbox" class="${n.check || ''}"${tick ? ' checked' : ''}>${tick}</span>`;
  const children = n.children ? `<ul>${n.children.map(renderNode).join('')}</ul>` : '';
  return `<li><div class="node">${expander}<label>${input}<span class="icon">${svg(n.icon, 16, '1 1 16 16')}</span><span>${n.html}</span></label></div>${children}</li>`;
};
document.getElementById('tree').innerHTML = tree.map(renderNode).join('');

// ---- model views -----------------------------------------------------
const axisText = (x, y, s, color) => `<text class="axis-label" x="${x}" y="${y}" fill="${color}">${s}</text>`;

const triad = (x, y) =>
  path(`M${x} ${y}l27 4`, '#f00', 'none', 1.5) + fillPath(`M${x + 26} ${y + 1}l10 4-10 2z`, '#b00000') +
  path(`M${x} ${y}l-13 5`, '#0e0', 'none', 1.5) + fillPath(`M${x - 20} ${y + 9}l6-6 2 5z`, '#00a000') +
  path(`M${x} ${y}v31`, '#00f', 'none', 1.5) + fillPath(`M${x - 3} ${y + 30}h6l-3 10z`, '#0000b0');

const drawModel = (moment) => {
  const top = 97, span = 578, parts = 10;
  let ordinates = '';
  for (let i = 1; i < parts; i++) {
    const y = top + span * i / parts;
    ordinates += `M226 ${y}L${226 - 2.7 * i} ${y - 0.3 * i}`;
  }
  return `<svg class="model" viewBox="4 0 443 721">
    ${fillPath('M185 679l30-14 52 8v15l-31 13-51-8z', '#80ff80')}
    ${fillPath('M185 679v14l24-12z', '#40f840')}
    ${fillPath('M185 679l30-14 52 8-30 13z', '#44c844')}
    ${fillPath('M203 682l23-7 27 3-16 8z', '#309a38')}
    ${path('M226.500 17v50', '#000080', 'none', 1.5)}${fillPath('M223 67h7l-3.500 7z', '#000080')}
    <text class="load-label" x="256" y="21">50.000 kN</text>
    <text class="load-label" x="226" y="87">1.000 kN</text>
    ${path('M200 95q1.500-2 3 0t3-1', '#000080')}
    ${path('M226 97L199 672', '#ff4040', 'none', 0.8)}
    ${path(ordinates, '#f00', 'none', 0.8)}
    ${path('M226.500 97v579', '#000', 'none', 1.5)}
    ${path('M226.500 97v18', '#f00')}<circle cx="226.500" cy="97.500" r="1.500" fill="#700"/>
    ${path('M199 672l28 4', '#f00', 'none', 1.3)}${triad(226.5, 676)}
    <text class="moment-label" x="193" y="675">${moment} kNm</text>
    ${axisText(269, 686, 'X', '#f00')}${axisText(202, 691, 'Y', '#0e0')}${axisText(226, 728, 'Z', '#00f')}
    ${triad(55, 622)}
    ${axisText(98, 632, 'X', '#f00')}${axisText(30, 637, 'Y', '#0e0')}${axisText(55, 674, 'Z', '#00f')}
  </svg>`;
};

const winButtons = [
  ['Minimize', 'M2.500 4.500h9v3h-9z', ''],
  ['Restore', 'M2.500 1.500h9v7h-9zM5.500 4.500h3v1h-3z', ''],
  ['Close', 'M2 1h3l2 2 2-2h3l-3.500 4 3.500 4h-3l-2-2-2 2h-3l3.500-4z', ' close']
].map(([label, d, cls]) => `<button class="win-btn${cls}" aria-label="${label}"><svg width="14" height="10">${path(d, '#3f4658', '#fff')}</svg></button>`).join('');

const renderWindow = ({ lc, name, moment, front }) => `
  <article class="win${front ? ' front' : ''}">
    <div class="win-title">${svg('bridge')}<h2>Second-Order Analysis, ${lc}*</h2>${winButtons}</div>
    <div class="view">
      <p>Internal Forces M-y [kNm]</p>
      <p>${lc} : ${name}</p>
      ${drawModel(moment)}
      <p>Max M-y: 0.00, Min M-y: ${moment} kNm</p>
    </div>
  </article>`;

document.getElementById('mdi').innerHTML = [
  { lc: 'LC1', name: 'Linear Static Analysis', moment: '-5.00' },
  { lc: 'LC2', name: 'Second-Order Analysis', moment: '-5.27', front: true }
].map(renderWindow).join('');
```
